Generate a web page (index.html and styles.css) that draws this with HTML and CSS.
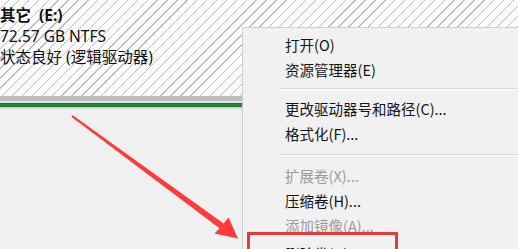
FILE: index.html
```html
<!DOCTYPE html>
<html>
<head>
<meta charset="utf-8">
<link rel="stylesheet" href="styles.css">
</head>
<body>
<div class="page">
  <div class="volume">
    <div class="line bold">其它&nbsp; (E:)</div>
    <div class="line">72.57 GB NTFS</div>
    <div class="line">状态良好 (逻辑驱动器)</div>
  </div>
  <div class="bar-gray"></div>
  <div class="bar-gap"></div>
  <div class="bar-green"></div>
  <div class="bar-edge"></div>
  <div class="lower"></div>

  <div class="menu">
    <div class="item">打开(O)</div>
    <div class="item">资源管理器(E)</div>
    <div class="sep"></div>
    <div class="item">更改驱动器号和路径(C)...</div>
    <div class="item">格式化(F)...</div>
    <div class="sep wide"></div>
    <div class="item disabled">扩展卷(X)...</div>
    <div class="item">压缩卷(H)...</div>
    <div class="item disabled">添加镜像(A)...</div>
    <div class="item last">删除卷(D)...</div>
  </div>

  <div class="highlight"></div>

  <svg class="arrow" width="518" height="249" viewBox="0 0 518 249">
    <polygon points="71.3,116.8 72.7,115.2 223.6,223.4 228.5,217.5 238,238.5 214.5,233.5 219.5,228.2" fill="#ff3a3a"/>
  </svg>
</div>
</body>
</html>
```
FILE: styles.css
```css
html, body {
  margin: 0;
  padding: 0;
  background: #f0f0f0;
  overflow: hidden;
}
.page {
  position: relative;
  width: 518px;
  height: 249px;
  overflow: hidden;
  font-family: "Noto Sans", "Noto Sans CJK SC", sans-serif;
  color: #111;
  display: flex;
  flex-direction: column;
}
.volume {
  height: 96px;
  box-sizing: border-box;
  padding-top: 5px;
  background-color: #ffffff;
  background-image: repeating-linear-gradient(135deg, #ffffff 0px, #ffffff 6px, #bdbdbd 6px, #bdbdbd 7px);
  font-size: 15.5px;
}
.line {
  line-height: 21px;
  white-space: nowrap;
}
.bold {
  font-weight: 700;
}
.bar-gray {
  height: 5px;
  background: #bdbdbd;
}
.bar-gap {
  height: 2px;
  background: #e6e6e6;
}
.bar-green {
  height: 4px;
  background: linear-gradient(#0d6e1e, #23963a 50%, #0d6e1e);
}
.bar-edge {
  height: 2px;
  background: #d6d6d6;
}
.lower {
  flex: 1;
  background: #f0f0f0;
}
.menu {
  position: absolute;
  left: 242px;
  top: 27px;
  width: 290px;
  height: 240px;
  box-sizing: border-box;
  background: #f1f1f1;
  border: 1px solid #cfcfcf;
  padding-top: 4px;
  font-size: 14.5px;
  font-family: "Noto Sans CJK SC", "Noto Sans", sans-serif;
}
.item {
  height: 25px;
  line-height: 25px;
  padding-left: 42px;
  color: #141414;
  white-space: nowrap;
}
.item.disabled {
  color: #9b9b9b;
}
.item.last {
  padding-top: 3px;
}
.sep {
  height: 1px;
  background: #d7d7d7;
  margin: 6px 0 6px 37px;
  border-bottom: 1px solid #ffffff;
}
.sep.wide {
  margin: 8px 0 7px 37px;
}
.highlight {
  position: absolute;
  left: 247px;
  top: 232px;
  width: 151px;
  height: 40px;
  box-sizing: border-box;
  border: 3px solid #e53a3a;
}
.arrow {
  position: absolute;
  left: 0;
  top: 0;
}
```
